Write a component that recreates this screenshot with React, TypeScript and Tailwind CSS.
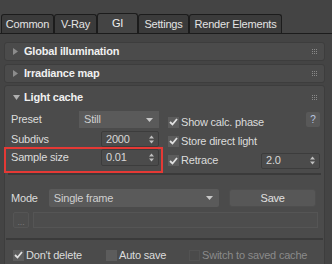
import React from "react";

const Grip = () => (
  <div className="grid grid-cols-3 gap-[1px] w-[5px] h-[5px]">
    {Array.from({ length: 9 }).map((_, i) => (
      <div key={i} className="w-[1px] h-[1px] bg-[#8a8a8a]" />
    ))}
  </div>
);

const TriRight = () => (
  <svg width="5" height="7" viewBox="0 0 5 7" className="block">
    <path d="M0 0 L5 3.5 L0 7 Z" fill="#8c8c8c" />
  </svg>
);
const TriDown = () => (
  <svg width="7" height="5" viewBox="0 0 7 5" className="block">
    <path d="M0 0 L7 0 L3.5 5 Z" fill="#b0b0b0" />
  </svg>
);
const DropArrow = () => (
  <svg width="7" height="4" viewBox="0 0 7 4" className="block">
    <path d="M0 0 L7 0 L3.5 4 Z" fill="#c8c8c8" />
  </svg>
);
const SpinArrows = () => (
  <svg width="5" height="9" viewBox="0 0 5 9" className="block">
    <path d="M0 3.5 L5 3.5 L2.5 0.5 Z" fill="#c0c0c0" />
    <path d="M0 5.5 L5 5.5 L2.5 8.5 Z" fill="#c0c0c0" />
  </svg>
);

const Check = ({ checked = true, disabled = false }: { checked?: boolean; disabled?: boolean }) => (
  <div
    className={`w-[11px] h-[11px] shrink-0 flex items-center justify-center ${
      disabled ? "bg-[#4a4a4a] border border-[#525252]" : "bg-[#5c5c5c]"
    }`}
  >
    {checked && (
      <svg width="9" height="8" viewBox="0 0 9 8" className="block">
        <path d="M1 4 L3.5 6.5 L8 1" stroke="#e0e0e0" strokeWidth="1.8" fill="none" />
      </svg>
    )}
  </div>
);

const Spinner = ({ value, w, h }: { value: string; w: string; h: string }) => (
  <div
    className={`${w} ${h} bg-[#4b4b4b] border border-[#3c3c3c] rounded-[2px] flex items-center pl-[4px] pr-[4px] justify-between text-[#d8d8d8]`}
  >
    <span>{value}</span>
    <SpinArrows />
  </div>
);

const RolloutHeader = ({ title, open = false }: { title: string; open?: boolean }) => (
  <div className="h-[17px] flex items-center pl-[8px] pr-[7px]">
    <div className="w-[8px] flex items-center">{open ? <TriDown /> : <TriRight />}</div>
    <span className="ml-[3px] font-bold text-[11px] text-[#f0f0f0]">{title}</span>
    <div className="flex-1" />
    <Grip />
  </div>
);

export default function App() {
  const tabs = [
    { t: "Common", w: "w-[53px]" },
    { t: "V-Ray", w: "w-[43px]" },
    { t: "GI", w: "w-[41px]", active: true },
    { t: "Settings", w: "w-[51px]" },
    { t: "Render Elements", w: "w-[93px]" },
  ];
  return (
    <div
      className="w-[332px] h-[264px] bg-[#444444] overflow-hidden relative text-[11px] text-[#dcdcdc] tracking-[-0.2px]"
      style={{ fontFamily: '"Liberation Sans", Arial, sans-serif' }}
    >
      {/* Tabs */}
      <div className="pt-[13px] pl-[1px] flex items-end border-b border-[#1c1c1c] h-[34px]">
        {tabs.map((tb) => (
          <div
            key={tb.t}
            className={`${tb.w} ${
              tb.active ? "h-[20px] bg-[#444444] text-[#f0f0f0]" : "h-[19px] bg-[#3b3b3b] text-[#e4e4e4]"
            } border border-b-0 border-[#1c1c1c] rounded-t-[3px] flex items-center justify-center text-[11px]`}
          >
            {tb.t}
          </div>
        ))}
      </div>

      {/* Rollouts */}
      <div className="pl-[4px] pr-[7px] pt-[8px] flex flex-col">
        <div className="bg-[#4b4b4b] border border-[#3d3d3d] rounded-[3px]">
          <RolloutHeader title="Global illumination" />
        </div>
        <div className="bg-[#4b4b4b] border border-[#3d3d3d] rounded-[3px] mt-[3px]">
          <RolloutHeader title="Irradiance map" />
        </div>
        <div className="bg-[#4b4b4b] border border-[#3d3d3d] rounded-[3px] mt-[2px] h-[200px]">
          <div className="pt-[3px]">
            <RolloutHeader title="Light cache" open />
          </div>
          <div className="flex pl-[6px] pr-[8px] pt-[5px] h-[67px]">
            {/* left column */}
            <div className="w-[154px] flex flex-col">
              <div className="h-[17px] flex items-center">
                <span className="w-[68px]">Preset</span>
                <div className="w-[80px] h-[17px] bg-[#5a5a5a] flex items-center justify-between pl-[5px] pr-[6px] text-[#cfcfcf]">
                  <span>Still</span>
                  <DropArrow />
                </div>
              </div>
              <div className="h-[16px] mt-[3px] flex items-center">
                <span className="w-[90px]">Subdivs</span>
                <Spinner value="2000" w="w-[58px]" h="h-[16px]" />
              </div>
              <div className="h-[17px] mt-[2px] flex items-center">
                <span className="w-[90px]">Sample size</span>
                <Spinner value="0.01" w="w-[58px]" h="h-[17px]" />
              </div>
            </div>
            {/* right column */}
            <div className="flex-1 flex flex-col pl-[9px]">
              <div className="h-[22px] flex items-center">
                <div className="flex items-center gap-[2px]">
                  <Check />
                  <span>Show calc. phase</span>
                </div>
                <div className="flex-1" />
                <div className="self-start mt-[1px] w-[14px] h-[15px] bg-[#585858] rounded-[2px] flex items-center justify-center text-[#b8c6e0] text-[10px]">
                  ?
                </div>
              </div>
              <div className="h-[16px] flex items-center gap-[2px]">
                <Check />
                <span>Store direct light</span>
              </div>
              <div className="h-[23px] flex items-center">
                <div className="flex items-center gap-[2px] w-[93px]">
                  <Check />
                  <span>Retrace</span>
                </div>
                <Spinner value="2.0" w="w-[59px]" h="h-[16px]" />
              </div>
            </div>
          </div>
          <div className="mx-[3px] h-[2px] bg-[#3a3a3a]" />
          <div className="flex items-center pl-[6px] pr-[8px] mt-[14px] h-[18px]">
            <span className="w-[38px]">Mode</span>
            <div className="w-[171px] h-[18px] bg-[#5a5a5a] rounded-[2px] flex items-center justify-between pl-[5px] pr-[6px] text-[#cfcfcf]">
              <span>Single frame</span>
              <DropArrow />
            </div>
            <div className="ml-[10px] w-[87px] h-[18px] bg-[#575757] border border-[#4e4e4e] rounded-[3px] flex items-center justify-center text-[#e0e0e0]">
              Save
            </div>
          </div>
          <div className="flex items-center pl-[8px] pr-[6px] mt-[5px] h-[16px] gap-[4px]">
            <div className="w-[16px] h-[16px] bg-[#4d4d4d] border border-[#555] rounded-[2px] flex items-end justify-center text-[#7a7a7a] text-[9px] leading-[10px]">
              ...
            </div>
            <div className="flex-1 h-[16px] bg-[#4d4d4d] border border-[#555]" />
          </div>
          <div className="mx-[1px] mt-[10px] h-[2px] bg-[#3a3a3a]" />
          <div className="flex items-center pl-[8px] mt-[8px] h-[14px]">
            <div className="flex items-center gap-[2px] w-[93px]">
              <Check />
              <span>Don't delete</span>
            </div>
            <div className="flex items-center gap-[2px] w-[83px]">
              <Check checked={false} />
              <span>Auto save</span>
            </div>
            <div className="flex items-center gap-[2px] text-[#8a8a8a]">
              <Check checked={false} disabled />
              <span>Switch to saved cache</span>
            </div>
          </div>
        </div>
      </div>

      {/* Annotation */}
      <div className="absolute left-[4px] top-[147px] w-[159px] h-[26px] border-2 border-[#e53935] pointer-events-none" />
    </div>
  );
}
